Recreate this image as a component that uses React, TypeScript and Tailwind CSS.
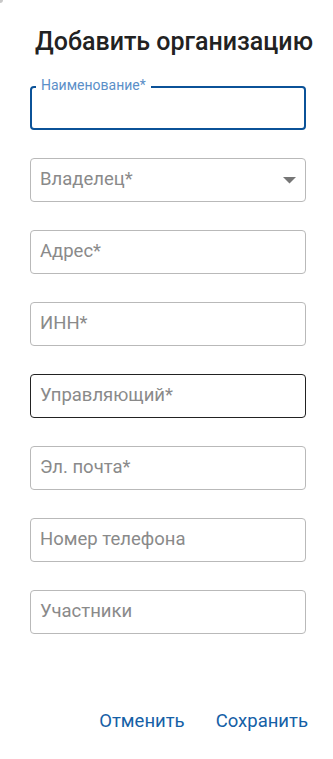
const fields = [
  { label: 'Владелец*', select: true },
  { label: 'Адрес*' },
  { label: 'ИНН*' },
  { label: 'Управляющий*', hover: true },
  { label: 'Эл. почта*' },
  { label: 'Номер телефона' },
  { label: 'Участники' },
];

export default function App() {
  return (
    <div className="relative h-[759px] w-[333px] overflow-hidden bg-white font-['Roboto',sans-serif]">
      <div className="absolute left-0 top-0 h-[3px] w-[3px] rounded-br-[3px] bg-[#c8c8c8]" />
      <h2 className="whitespace-nowrap pl-[35px] pt-[27px] text-[25px] font-medium leading-[30px] text-[#222]">
        Добавить организацию
      </h2>

      <div className="mt-[29px] flex flex-col gap-[28px] pl-[30px] pr-[27px]">
        <div className="relative h-[44px] rounded-[4px] border-2 border-[#0b5298]">
          <span className="absolute -top-[11px] left-[4px] bg-white px-[5px] text-[14px] leading-[16px] text-[#5b8fc8]">
            Наименование*
          </span>
        </div>

        {fields.map((f) => (
          <div
            key={f.label}
            className={`flex h-[44px] items-center justify-between rounded-[4px] border pl-[9px] pr-[8px] ${f.hover ? 'border-[#222]' : 'border-[#b9b9b9]'}`}
          >
            <span className="text-[18.5px] text-[#8a8a8a]">{f.label}</span>
            {f.select && (
              <svg width="13" height="7" viewBox="0 0 13 7" className="mr-[1px]">
                <path d="M0 0 L13 0 L6.5 6.5 Z" fill="#767676" />
              </svg>
            )}
          </div>
        ))}
      </div>

      <div className="mt-[74px] flex justify-end gap-[31px] pr-[25px] text-[18.5px] text-[#1560a6]">
        <button type="button">Отменить</button>
        <button type="button">Сохранить</button>
      </div>
    </div>
  );
}
